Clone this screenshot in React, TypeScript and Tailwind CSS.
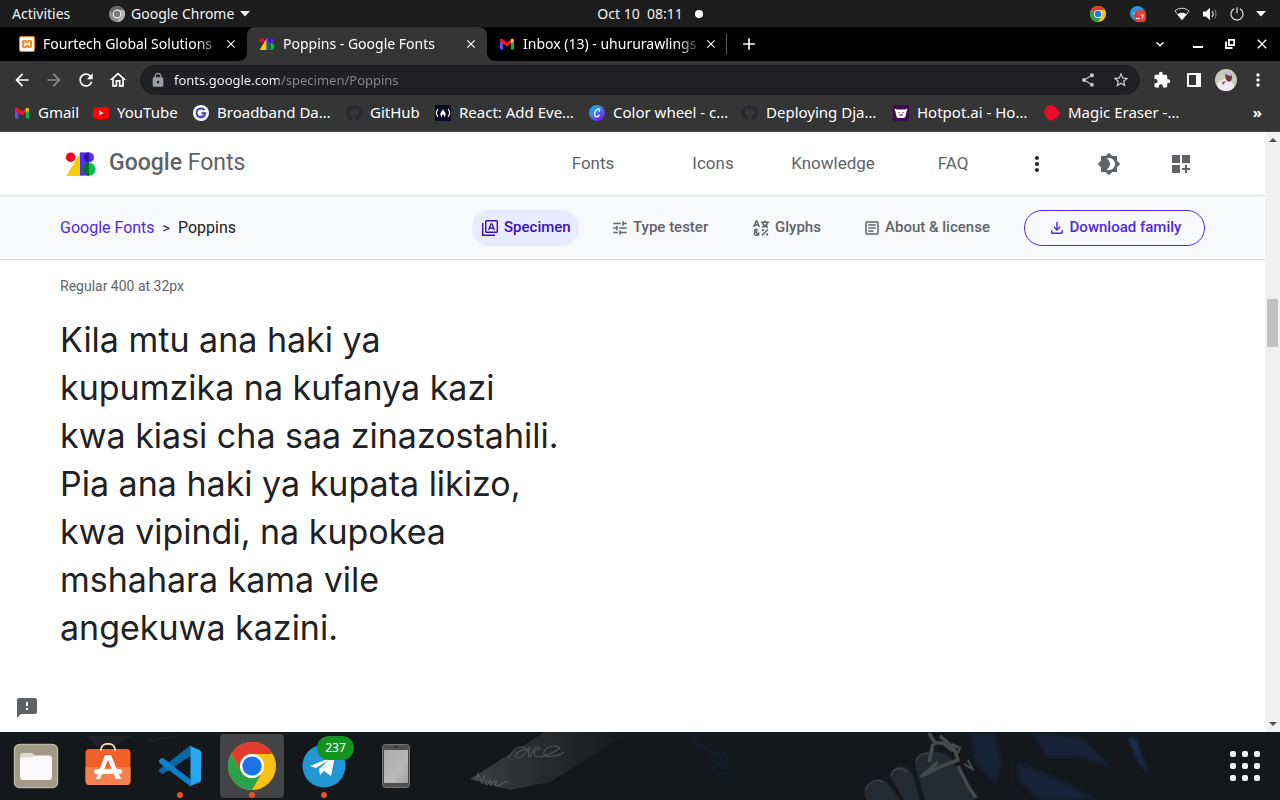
import type { ReactNode } from "react";
import {
  MdArrowBack,
  MdArrowForward,
  MdRefresh,
  MdOutlineHome,
  MdLock,
  MdShare,
  MdStarOutline,
  MdExtension,
  MdMoreVert,
  MdBrightness4,
  MdDashboardCustomize,
  MdTune,
  MdOutlineArticle,
  MdOutlineFileDownload,
  MdFeedback,
  MdClose,
  MdAdd,
  MdExpandMore,
} from "react-icons/md";
import { FaGithub } from "react-icons/fa";
import { SiXampp } from "react-icons/si";

function FontsMark({ className }: { className: string }) {
  return (
    <svg viewBox="0 0 31 24" className={className} aria-hidden="true">
      <circle cx="5.2" cy="5.2" r="4.8" fill="#f9001c" />
      <path d="M15 .2V24H.8z" fill="#fbcb06" />
      <path d="M14.5.4h9v23.2h-9z" fill="#5030f0" />
      <circle cx="23.5" cy="5.4" r="5" fill="#5030f0" />
      <path d="M23.5.4v10a5 5 0 0 1 0-10z" fill="#3613a4" />
      <circle cx="23.5" cy="17.2" r="6.6" fill="#06c152" />
      <path d="M23.5 10.6v13.2a6.6 6.6 0 0 1 0-13.2z" fill="#0a6b30" />
    </svg>
  );
}

function Gmail() {
  return (
    <svg viewBox="0 0 16 12" className="h-3 w-4" aria-hidden="true">
      <path d="M1 1.5V11.5H4.2V5z" fill="#5c50f5" />
      <path d="M15 1.5V11.5H11.8V5z" fill="#12b24a" />
      <path d="M1 2.2C1 .8 2.5.2 3.6 1L8 4.4 12.4 1v4L8 8.4 1 3.6z" fill="#f01424" />
      <path d="M11.8 1.3C13 .2 15 .8 15 2.4v1.2l-3.2 2z" fill="#fbc112" />
    </svg>
  );
}

function YouTube() {
  return (
    <svg viewBox="0 0 16 12" className="h-3 w-4" aria-hidden="true">
      <rect width="16" height="12" rx="3" fill="#f00" />
      <path d="M6.3 3.5v5L10.6 6z" fill="#fff" />
    </svg>
  );
}

function ChromeLogo({ className }: { className: string }) {
  return (
    <svg viewBox="0 0 48 48" className={className} aria-hidden="true">
      <circle cx="24" cy="24" r="24" fill="#fbc116" />
      <path d="M3.2 12A24 24 0 0 1 44.8 12H24A12 12 0 0 0 13.6 30z" fill="#e33b2e" />
      <path d="M3.2 12A24 24 0 0 0 24 48L34.4 30A12 12 0 0 1 13.6 30z" fill="#2da04b" />
      <circle cx="24" cy="24" r="12" fill="#fff" />
      <circle cx="24" cy="24" r="9.6" fill="#1a73e8" />
    </svg>
  );
}

function GreyChrome() {
  return (
    <svg viewBox="0 0 16 16" className="size-4" aria-hidden="true">
      <circle cx="8" cy="8" r="8" fill="#8e8e8e" />
      <path d="M1 4a8 8 0 0 1 14 0H8a4 4 0 0 0-3.4 6z" fill="#666" />
      <path d="M15 4a8 8 0 0 1-7 12l3.5-6A4 4 0 0 0 8 4z" fill="#b5b5b5" />
      <circle cx="8" cy="8" r="4.4" fill="#eee" />
      <circle cx="8" cy="8" r="3.2" fill="#777" />
    </svg>
  );
}

function Broadband() {
  return (
    <svg viewBox="0 0 16 16" className="size-4" aria-hidden="true">
      <circle cx="8" cy="8" r="8" fill="#fff" />
      <path d="M11.4 5.2A4.4 4.4 0 1 0 12.3 8.2H8.4" fill="none" stroke="#3d3fae" strokeWidth="1.9" />
      <path d="M7 11c2 .6 3.6 0 4.5-1.6" fill="none" stroke="#6a52e0" strokeWidth="1.4" />
    </svg>
  );
}

function CodeCamp() {
  return (
    <svg viewBox="0 0 16 16" className="size-4" aria-hidden="true">
      <path d="M0 0h16v16H0z" fill="#0a0a23" />
      <path d="M3 4C1 6.5 1 9.5 3 12M13 4c2 2.500 2 5.500 0 8" fill="none" stroke="#fff" strokeWidth="1.2" />
      <path d="M8 3.800c0 2 2.600 3 2.600 5.500 0 1.700-1 2.500-1.600 2.700.4-1.200 0-2-1-2.800-1 .8-1.400 1.600-1 2.800-.6-.2-1.600-1-1.600-2.700C5.400 7 7.800 6 8 3.800z" fill="#fff" />
    </svg>
  );
}

function Canva() {
  return (
    <svg viewBox="0 0 16 16" className="size-4" aria-hidden="true">
      <defs>
        <linearGradient id="canva" x1="0" y1="0" x2=".7" y2="1">
          <stop offset="0" stopColor="#06c3cf" />
          <stop offset=".5" stopColor="#3d7ee6" />
          <stop offset="1" stopColor="#7b1de8" />
        </linearGradient>
      </defs>
      <circle cx="8" cy="8" r="8" fill="url(#canva)" />
      <path d="M10 6.400c1.200-1.200.6-2.700-.8-2.500-2 .2-3.800 3-3.600 5.500.2 3.200 3 3.200 4.800.8" fill="none" stroke="#fff" strokeWidth="1.3" strokeLinecap="round" />
    </svg>
  );
}

function Hotpot() {
  return (
    <svg viewBox="0 0 16 16" className="size-4" aria-hidden="true">
      <path d="M0 0h16v16H0z" fill="#3e0a52" />
      <path d="M1.500 3.500l2.500 1h8l2.500-1-1 3.500-1 4.500L11 13H5l-1.500-1.500-1-4.500z" fill="#fff" />
      <path d="M5.500 7.500h1M9.500 7.500h1M6 10h4" stroke="#3e0a52" strokeWidth="1" />
    </svg>
  );
}

function MagicBlob() {
  return (
    <svg viewBox="0 0 16 16" className="size-4" aria-hidden="true">
      <path d="M3 1.500C6-.5 10 0 11.500 2.500c1.200 1.500 4 2.500 4.500 5 .2 2.500-2.500 4-4 5.500-2 2-4.500 3.500-6.500 2.500C3 14 3 12 1.500 10.500-.5 8 0 4 3 1.500z" fill="#ee0a28" />
    </svg>
  );
}

function SpecimenIcon() {
  return (
    <svg viewBox="0 0 16 16" className="size-4 shrink-0" fill="none" stroke="currentColor" strokeWidth="1.400" aria-hidden="true">
      <path d="M.7 3v12.300H13" />
      <rect x="3.700" y=".7" width="11.600" height="11.600" rx=".8" />
      <path d="M6.600 10L9 3.800h1l2.400 6.200M7.500 8h4" strokeWidth="1.300" />
    </svg>
  );
}

function GlyphsIcon() {
  return (
    <svg viewBox="0 0 16 16" className="size-4 shrink-0" fill="none" stroke="currentColor" strokeWidth="1.500" aria-hidden="true">
      <path d="M.7 7L3.200 1h.6l2.500 6M1.700 5h3.700" />
      <path d="M8 2.200h8M12 .4v1.800M9.300 3.200c1 2 3 3.500 5.700 4M14.700 3.200c-1 2-3 3.500-5.700 4" />
      <path d="M6.200 15.300L2 11.200c-.7-1 0-2 1-2s1.700 1.200.6 2l-1.500 1c-1.400 1-.8 3.100 1 3.100 1.600 0 2.700-1.300 2.700-2.800" />
      <path d="M9 15.300L15 9.200" />
      <circle cx="10" cy="10.200" r="1.1" fill="currentColor" stroke="none" />
      <circle cx="14.200" cy="14.400" r="1.1" fill="currentColor" stroke="none" />
    </svg>
  );
}

function Tab({ icon, title, active }: { icon: ReactNode; title: string; active?: boolean }) {
  return (
    <div className={`flex w-60 items-center pr-2 pl-3 ${active ? "rounded-t-lg bg-[#353535]" : ""}`}>
      <span className="flex w-6 shrink-0 items-center">{icon}</span>
      <button
        role="tab"
        aria-selected={!!active}
        className="min-w-0 flex-1 overflow-hidden text-left whitespace-nowrap [mask-image:linear-gradient(to_right,#000_86%,transparent)]"
      >
        {title}
      </button>
      <button aria-label={`Close ${title}`} className="flex size-4 shrink-0 items-center justify-center">
        <MdClose className="size-3.5" />
      </button>
    </div>
  );
}

const bookmarks: { label: string; icon: ReactNode; width: string }[] = [
  { label: "Gmail", icon: <Gmail />, width: "w-[79px]" },
  { label: "YouTube", icon: <YouTube />, width: "w-[100px]" },
  { label: "Broadband Da…", icon: <Broadband />, width: "w-[153px]" },
  { label: "GitHub", icon: <FaGithub className="size-4 text-[#24292f]" />, width: "w-[89px]" },
  { label: "React: Add Eve…", icon: <CodeCamp />, width: "w-[154px]" },
  { label: "Color wheel - c…", icon: <Canva />, width: "w-[153px]" },
  { label: "Deploying Dja…", icon: <FaGithub className="size-4 text-[#24292f]" />, width: "w-[151px]" },
  { label: "Hotpot.ai - Ho…", icon: <Hotpot />, width: "w-[151px]" },
  { label: "Magic Eraser -…", icon: <MagicBlob />, width: "w-[151px]" },
];

function SystemBar() {
  return (
    <header className="grid h-[27px] grid-cols-[1fr_auto_1fr] items-center bg-[#1d1d1d] px-3 text-[#f2f2f2]">
      <div className="flex items-center">
        <button className="w-[97px] text-left">Activities</button>
        <button className="flex items-center gap-1.5">
          <GreyChrome />
          Google Chrome
          <svg viewBox="0 0 10 6" className="h-1.5 w-2.5" aria-hidden="true">
            <path d="M0 0h10L5 5.500z" fill="currentColor" />
          </svg>
        </button>
      </div>
      <button className="flex items-center gap-3 pl-5">
        <span className="whitespace-pre">Oct 10  08:11</span>
        <span className="size-2 rounded-full bg-white" />
      </button>
      <div className="flex items-center justify-end pr-0.5">
        <ChromeLogo className="mr-6 size-4" />
        <svg viewBox="0 0 16 16" className="mr-7 size-4" aria-hidden="true">
          <circle cx="7.500" cy="7.500" r="7.500" fill="#2a9ad6" />
          <path d="M2.500 7.500l5-2v3z" fill="#fff" />
          <rect x="4.500" y="4.500" width="11.500" height="11.500" rx="3" fill="#f2372f" />
          <path d="M6 12.500h3.500M10.500 9h3l-1.600 4" fill="none" stroke="#fff" strokeWidth=".9" />
        </svg>
        <svg viewBox="0 0 16 14" className="mr-3 h-3.5 w-4" aria-hidden="true">
          <path d="M.9 4C4.500.4 11.500.4 15.100 4L8 12.800z" fill="none" stroke="#ccc" strokeWidth="1" />
          <path d="M3.600 7.400c2-2.300 6.800-2.300 8.800 0L8 12.800z" fill="#fff" />
        </svg>
        <svg viewBox="0 0 16 14" className="mr-3 h-3.5 w-4" aria-hidden="true">
          <path d="M1 4.500h3L8 .8v12.400L4 9.500H1z" fill="#fff" />
          <path d="M10 4c1.200 1.600 1.200 4.400 0 6" fill="none" stroke="#ddd" strokeWidth="1.200" />
          <path d="M12.500 2.500c2 2.500 2 6.500 0 9" fill="none" stroke="#888" strokeWidth="1" />
        </svg>
        <svg viewBox="0 0 14 14" className="mr-3 size-3.5" fill="none" stroke="#eee" aria-hidden="true">
          <path d="M4.200 1.800a6 6 0 1 0 5.600 0M7 .3v6" strokeWidth="1.100" />
        </svg>
        <svg viewBox="0 0 10 6" className="h-1.5 w-2.5" aria-hidden="true">
          <path d="M0 0h10L5 5.500z" fill="#fff" />
        </svg>
      </div>
    </header>
  );
}

function BrowserChrome() {
  return (
    <div className="bg-[#353535] text-white">
      <div className="flex h-[34px]">
        <div role="tablist" className="flex">
          <div className="flex rounded-br-lg bg-black pl-[7px]">
            <Tab
              icon={
                <span className="flex size-4 items-center justify-center rounded-xs bg-[#f57c14]">
                  <SiXampp className="size-3.5" />
                </span>
              }
              title="Fourtech Global Solutions"
            />
          </div>
          <div className="flex bg-linear-to-b from-black from-50% to-[#353535] to-50%">
            <Tab active icon={<FontsMark className="h-3 w-4" />} title="Poppins - Google Fonts" />
          </div>
        </div>
        <div className="flex flex-1 rounded-bl-lg bg-black">
          <Tab icon={<Gmail />} title="Inbox (13) - uhururawlings" />
          <div className="flex flex-1 items-center">
            <span className="-ml-px h-5 w-px bg-[#555]" />
            <button aria-label="New tab" className="ml-3 flex size-5 items-center justify-center">
              <MdAdd className="size-5" />
            </button>
            <div className="ml-auto flex items-center gap-4 pr-2.5">
              <button aria-label="Search tabs" className="mr-1.5"><MdExpandMore className="size-4" /></button>
              <button aria-label="Minimise" className="flex size-4 items-end justify-center pb-1">
                <span className="h-0.5 w-2.5 bg-white" />
              </button>
              <button aria-label="Restore" className="flex size-4 items-center justify-center">
                <svg viewBox="0 0 10 10" className="size-2.5" fill="none" stroke="#fff" strokeWidth="1.800" aria-hidden="true">
                  <path d="M3.900.9h5.200v5.200H3.900zM1 2.500V9h6.500" />
                </svg>
              </button>
              <button aria-label="Close window"><MdClose className="size-4" /></button>
            </div>
          </div>
        </div>
      </div>
      <div className="flex h-[38px] items-center pr-1.5 pl-3">
        <div className="flex w-32 items-center gap-3">
          <button aria-label="Back"><MdArrowBack className="size-5" /></button>
          <button aria-label="Forward"><MdArrowForward className="size-5 text-[#8a8a8a]" /></button>
          <button aria-label="Reload"><MdRefresh className="size-5" /></button>
          <button aria-label="Home"><MdOutlineHome className="size-5" /></button>
        </div>
        <div className="flex h-[30px] flex-1 items-center rounded-full bg-[#202024] px-2.5">
          <MdLock className="mr-2 size-4 text-[#9aa0a6]" />
          <input
            aria-label="Address"
            defaultValue="fonts.google.com/specimen/Poppins"
            className="min-w-0 flex-1 bg-[linear-gradient(to_right,#fff_105px,#8b8b8f_105px)] bg-clip-text text-[13px] text-transparent outline-none"
          />
          <button aria-label="Share" className="mr-4"><MdShare className="size-4 text-[#c4c4c4]" /></button>
          <button aria-label="Bookmark"><MdStarOutline className="size-[18px] text-[#d0d0d0]" /></button>
        </div>
        <div className="ml-1.5 flex items-center">
          <button aria-label="Extensions" className="flex w-8 justify-center"><MdExtension className="size-[18px]" /></button>
          <button aria-label="Side panel" className="flex w-8 justify-center">
            <svg viewBox="0 0 14 14" className="size-3.5" aria-hidden="true">
              <path d="M0 0h14v14H0zM2 2v10h7V2z" fill="#fff" fillRule="evenodd" />
            </svg>
          </button>
          <button aria-label="Profile" className="flex w-8 justify-center">
            <svg viewBox="0 0 22 22" className="size-[22px] rounded-full" aria-hidden="true">
              <path d="M0 0h22v22H0z" fill="#c9c9bb" />
              <path d="M2 22l1-9 6-3 6 1 4 5v6z" fill="#f0e8f0" />
              <path d="M10 5c3-2 7-1 7 3 0 3-1 4-3 5l-3-2z" fill="#6d3c40" />
              <path d="M10 5c2-3 6-3 7 1l-2 1z" fill="#c9b7dd" />
              <path d="M11 12l-3 4-1-3z" fill="#8a5450" />
            </svg>
          </button>
          <button aria-label="Menu" className="flex w-8 justify-center"><MdMoreVert className="size-5" /></button>
        </div>
      </div>
      <nav aria-label="Bookmarks" className="flex h-[33px] items-center border-b border-[#4a4a4a] pb-1 pl-3.5 text-[15px]">
        {bookmarks.map((b) => (
          <a key={b.label} href="#" className={`flex shrink-0 items-center gap-2 whitespace-nowrap ${b.width}`}>
            <span className="shrink-0">{b.icon}</span>
            {b.label}
          </a>
        ))}
        <button aria-label="More bookmarks" className="mr-4.5 ml-auto font-bold">»</button>
      </nav>
    </div>
  );
}

function SiteHeader() {
  return (
    <header className="flex h-16 items-center border-b border-[#dadce0] pr-12 pl-[65px] text-[#5f6368]">
      <a href="#" className="flex items-center gap-3">
        <FontsMark className="h-6 w-8" />
        <span className="text-[23px]"><span className="font-medium">Google</span> Fonts</span>
      </a>
      <nav className="ml-auto flex items-center text-[17px]">
        <a href="#" className="w-30 text-center">Fonts</a>
        <a href="#" className="w-30 text-center">Icons</a>
        <a href="#" className="w-30 text-center">Knowledge</a>
        <a href="#" className="w-30 text-center">FAQ</a>
      </nav>
      <button aria-label="More" className="mr-3 flex w-12 justify-center"><MdMoreVert className="size-6 text-[#202124]" /></button>
      <button aria-label="Theme" className="flex w-18 justify-center"><MdBrightness4 className="size-6" /></button>
      <button aria-label="Selected families" className="flex w-18 justify-center"><MdDashboardCustomize className="size-6" /></button>
    </header>
  );
}

function SpecimenBar() {
  return (
    <div className="flex h-16 items-center border-b border-[#dadce0] bg-[#f8f9fb] px-15">
      <nav aria-label="Breadcrumb" className="flex items-center gap-2 text-base text-[#202124]">
        <a href="#" className="text-[#5029e0]">Google Fonts</a>
        <span className="text-sm">&gt;</span>
        <span>Poppins</span>
      </nav>
      <div className="ml-auto flex items-center gap-6 text-[15px] font-medium whitespace-nowrap text-[#5f6368]">
        <a href="#" className="flex h-9 w-[107px] items-center gap-1.5 rounded-full bg-[#e8eafe] pl-2.5 text-[#3c11b4]"><SpecimenIcon />Specimen</a>
        <a href="#" className="flex h-9 w-[116px] items-center gap-1 pl-2"><MdTune className="size-[18px] shrink-0" />Type tester</a>
        <a href="#" className="flex h-9 w-[88px] items-center gap-1.5 pl-2.5"><GlyphsIcon />Glyphs</a>
        <a href="#" className="flex h-9 w-[145px] items-center gap-1 pl-2"><MdOutlineArticle className="size-[18px] shrink-0" />About &amp; license</a>
        <button className="flex h-9 w-[181px] items-center justify-center gap-1 rounded-full border border-[#5029e0] text-[#5029e0]"><MdOutlineFileDownload className="size-[18px]" />Download family</button>
      </div>
    </div>
  );
}

function DockBackdrop() {
  return (
    <svg viewBox="0 0 1280 68" preserveAspectRatio="xMidYMid slice" className="absolute inset-0 size-full" aria-hidden="true">
      <defs>
        <linearGradient id="wing" x1="0" x2="1">
          <stop offset="0" stopColor="#404040" />
          <stop offset=".35" stopColor="#2c2e30" />
          <stop offset="1" stopColor="#15191c" />
        </linearGradient>
        <filter id="soft"><feGaussianBlur stdDeviation="2" /></filter>
        <filter id="edge"><feGaussianBlur stdDeviation=".7" /></filter>
      </defs>
      <path d="M0 0h1280v68H0z" fill="#15181b" />
      <path d="M470 47L545 0h85l-80 50-40 8z" fill="url(#wing)" />
      <path d="M508 26c8-12 14-14 20-8-6-2-14 4-12 7 4 3 10-4 14-10-2 6-2 10 0 10 4-10 8-12 10-8-6 0-8 8-2 8 8 0 18-6 22-9-4-4-14-2-16 4-2 6 12 6 20 0" fill="none" stroke="#515151" strokeWidth="1.200" />
      <path d="M476 48l2-6 4 9 3-8M488 48c-4 2-3 5 0 4l2-4 1 5 3-4 3 1c-3 3-2 5 3 3l4-3 5 0" fill="none" stroke="#5a5a5a" strokeWidth="1.200" />
      <path d="M86 4h46l-18 10H96zM146 8l40-6-34 8z" fill="#202325" filter="url(#edge)" />
      <g filter="url(#soft)">
        <path d="M970 0h24l8 30-6 22-20-20zM1032 0l50 5 30 30-35-10-30 0zM1018 30l50 22 30 16h-60l-20-20z" fill="#122036" />
        <path d="M1127 4l8 2 14 38-10-14z" fill="#143058" />
        <path d="M692 2c4 16 20 18 22 10M708 30c4-14 20-10 20 2M712 40c2-14 12-12 14-2" stroke="#13243a" strokeWidth="2" fill="none" />
      </g>
      <g filter="url(#edge)">
        <path d="M864 62c2-14 18-20 26-8l10 14h-34zM890 44c4-14 18-14 24 2l6 22h-16zM915 34c2-16 26-20 38-6l22 40h-50z" fill="#202a30" />
        <path d="M865 58c4-9 12-12 18-8M891 44c2-8 10-10 16-4M916 30c2-8 10-10 14-8" fill="none" stroke="#3b444a" strokeWidth="1.500" />
        <path d="M929 1l6 10 8 0 10 8M933 12l-4 18M940 4l14 12 4 12-16 6-20 10 16-14M958 34l10 20 8 12" fill="none" stroke="#46494c" strokeWidth="3.500" strokeLinejoin="round" />
        <path d="M952 12l8 4-4 8M964 32l10 6M968 28l4 8" fill="none" stroke="#4a4e52" strokeWidth="2" />
      </g>
    </svg>
  );
}

function DockItem({ label, running, active, children }: { label: string; running?: boolean; active?: boolean; children: ReactNode }) {
  return (
    <button aria-label={label} className={`relative mx-1 flex h-16 w-16 items-center justify-center rounded ${active ? "bg-[#434446]" : ""}`}>
      {children}
      {running && <span className="absolute bottom-0 size-1.5 rounded-full bg-[#e95420]" />}
    </button>
  );
}

function Dock() {
  return (
    <footer className="relative flex h-[68px] items-center overflow-hidden">
      <DockBackdrop />
      <div className="relative flex flex-1 items-center">
        <DockItem label="Files">
          <svg viewBox="0 0 46 46" className="size-[46px]" aria-hidden="true">
            <rect x="1.500" y="1.500" width="43" height="43" rx="5" fill="#a19a87" stroke="#bab5a7" strokeWidth="1.500" />
            <path d="M7 13a3 3 0 0 1 3-3h9l4 3h13v8H7z" fill="#dedacd" />
            <path d="M7 17c0-2 1-2.500 3-2.500h10l3-2h13a3 3 0 0 1 3 3V34a3 3 0 0 1-3 3H10a3 3 0 0 1-3-3z" fill="#fafafa" />
          </svg>
        </DockItem>
        <DockItem label="Ubuntu Software">
          <svg viewBox="0 0 46 46" className="size-[46px]" aria-hidden="true">
            <rect x=".5" y="6" width="45" height="36" rx="4" fill="#f25f29" />
            <path d="M.5 24h45v14.500a4 4 0 0 1-4 3.500h-37a4 4 0 0 1-4-3.500z" fill="#f5814f" />
            <path d="M16 8V6c1-7 13-7 14 0v2" fill="none" stroke="#f7dfb5" strokeWidth="1.800" />
            <path d="M20 12h6l10 24h-5l-8-19-8 19h-4z" fill="#fff" />
            <rect x="9" y="26" width="28" height="5" rx="2.500" fill="#fff" />
          </svg>
        </DockItem>
        <DockItem label="Visual Studio Code" running>
          <svg viewBox="0 0 100 100" className="size-[42px]" aria-hidden="true">
            <path d="M5 32c2-1.500 4-1.500 6 0l64 50v17L1 42c-1.500-1.500-1.500-4 0-5.500z" fill="#0a7fca" />
            <path d="M5 68c2 1.500 4 1.500 6 0l64-42V1L1 58c-1.500 1.500-1.500 4 0 5.500z" fill="#0868a8" />
            <path d="M5 32c2-1.500 4-1.500 6 0l26 20-11 10L1 42c-1.500-1.500-1.500-4 0-5.500z" fill="#0a7fca" />
            <path d="M72 1l25 11c2 1 3 3 3 5v66c0 2-1 4-3 5L72 99l3-5V6z" fill="#25a8f2" />
          </svg>
        </DockItem>
        <DockItem label="Google Chrome" running active>
          <ChromeLogo className="size-12" />
        </DockItem>
        <DockItem label="Telegram" running>
          <svg viewBox="0 0 44 44" className="size-11" aria-hidden="true">
            <circle cx="22" cy="22" r="21.500" fill="#2297d3" />
            <path d="M8 22l25-10-4 20-7-5-4 4-1-6 10-9-13 8z" fill="#fff" />
          </svg>
          <span className="absolute top-0.5 left-[25px] flex h-6 w-[37px] items-center justify-center rounded-full bg-[#12961f] text-xs text-white">237</span>
        </DockItem>
        <DockItem label="Phone">
          <svg viewBox="0 0 28 44" className="h-11 w-7" aria-hidden="true">
            <defs>
              <linearGradient id="glass" x1="0" x2="1" y2="1">
                <stop offset="0" stopColor="#aaa" />
                <stop offset=".6" stopColor="#b8b8b8" />
                <stop offset="1" stopColor="#a2a2a2" />
              </linearGradient>
            </defs>
            <rect x=".5" y=".5" width="27" height="43" rx="3" fill="#505050" stroke="#777" />
            <path d="M2 6h24v33H2z" fill="url(#glass)" />
            <path d="M12 3h4" stroke="#222" strokeWidth="1.200" />
          </svg>
        </DockItem>
      </div>
      <button aria-label="Show applications" className="relative mr-5 grid grid-cols-3 gap-1.5">
        {Array.from({ length: 9 }, (_, i) => (
          <span key={i} className="size-1.5 rounded-xs bg-[#f2f2f2]" />
        ))}
      </button>
    </footer>
  );
}

export default function App() {
  return (
    <div className="flex min-h-screen flex-col bg-white font-['Noto_Sans',sans-serif] text-sm">
      <SystemBar />
      <BrowserChrome />
      <div className="flex flex-1">
        <div className="flex min-w-0 flex-1 flex-col font-['Roboto',sans-serif]">
          <SiteHeader />
          <SpecimenBar />
          <main className="flex-1 px-15 pt-4">
            <p className="text-sm text-[#5f6368]">Regular 400 at 32px</p>
            <p className="mt-5 font-['Inter',sans-serif] text-[34px] leading-12 whitespace-pre-line text-[#202124]">
              {"Kila mtu ana haki ya\nkupumzika na kufanya kazi\nkwa kiasi cha saa zinazostahili.\nPia ana haki ya kupata likizo,\nkwa vipindi, na kupokea\nmshahara kama vile\nangekuwa kazini."}
            </p>
          </main>
          <button aria-label="Send feedback" className="mb-3 ml-[15px] self-start text-[#5f6368]">
            <MdFeedback className="size-6" />
          </button>
        </div>
        <div className="flex w-[15px] flex-col items-center justify-between bg-[#f1f1f1] py-1.5">
          <svg viewBox="0 0 8 4" className="h-1 w-2" aria-hidden="true"><path d="M0 4h8L4 0z" fill="#505050" /></svg>
          <div className="flex w-full flex-1 flex-col items-center">
            <div className="grow-[156]" />
            <div className="h-12 w-[11px] bg-[#c1c1c1]" />
            <div className="grow-[372]" />
          </div>
          <svg viewBox="0 0 8 4" className="h-1 w-2" aria-hidden="true"><path d="M0 0h8L4 4z" fill="#505050" /></svg>
        </div>
      </div>
      <Dock />
    </div>
  );
}
